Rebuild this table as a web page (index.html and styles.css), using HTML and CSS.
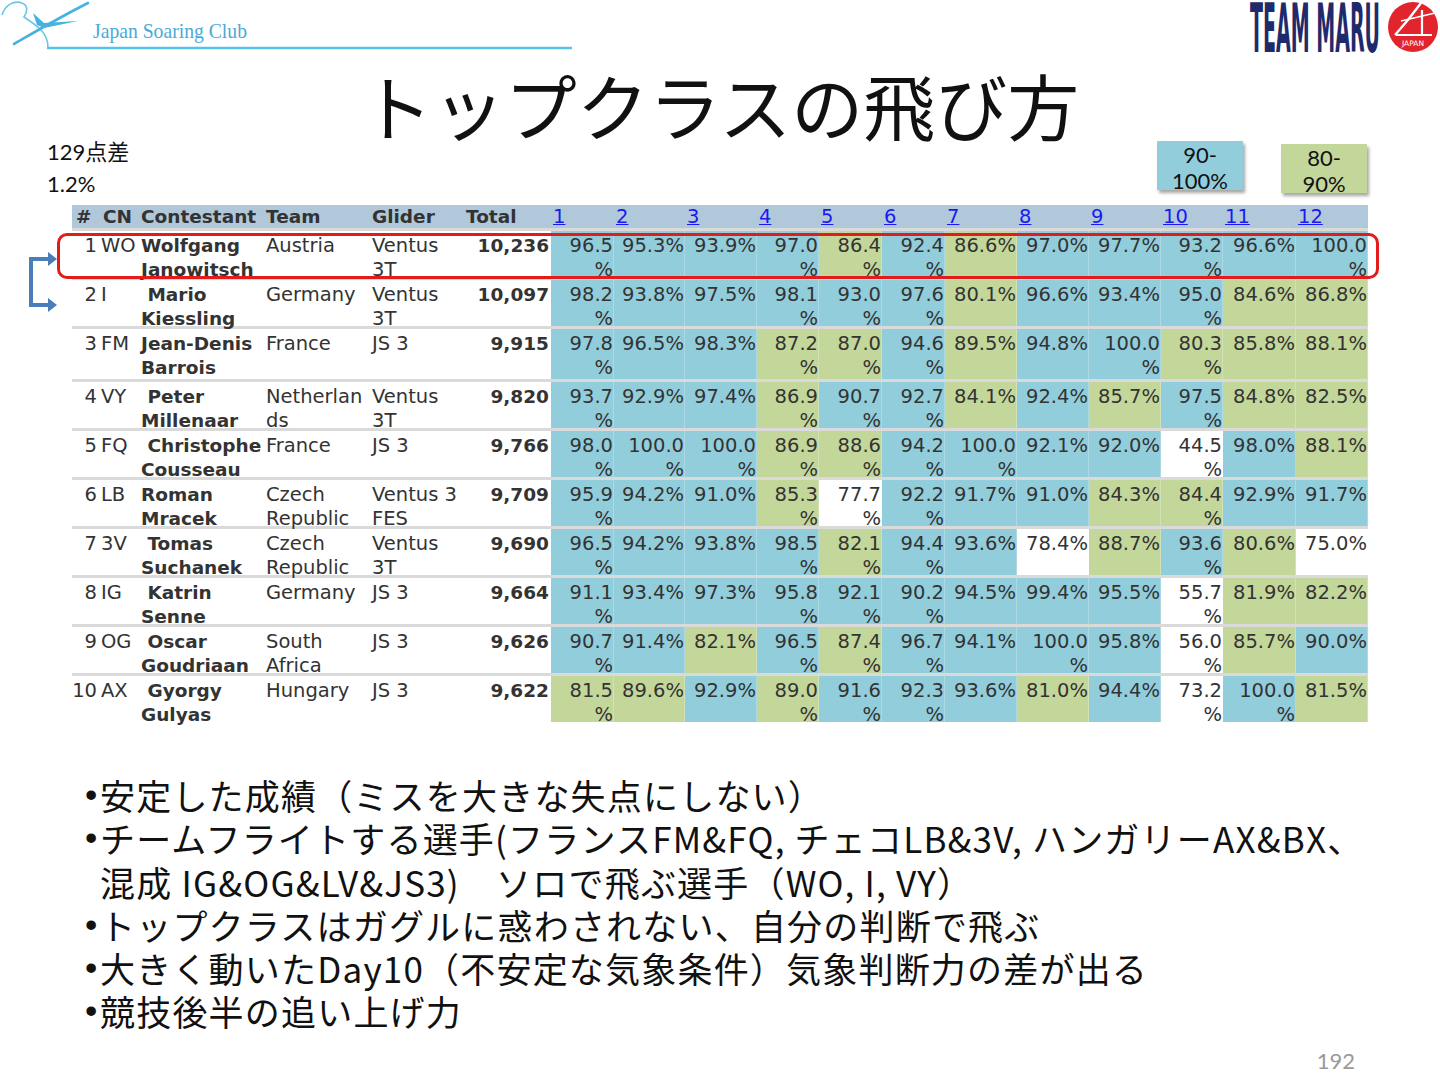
FILE: index.html
```html
<!DOCTYPE html>
<html lang="ja">
<head>
<meta charset="utf-8">
<title>トップクラスの飛び方</title>
<link rel="stylesheet" href="styles.css">
</head>
<body>
<div class="slide">
  <header class="top">
    <svg class="jsc" width="580" height="55" viewBox="0 0 580 55">
      <path d="M2 15 C5 5 14 0 22 3 C29 6 27 12 24 17 C30 21 36 25 41 30 C46 35 48 41 48 48" fill="none" stroke="#6cc6e8" stroke-width="1.6"/>
      <path d="M14 44 C40 29 62 16 88 3" fill="none" stroke="#45b2df" stroke-width="2.6" stroke-linecap="round"/>
      <path d="M33 13 L37 25 L44 28 L78 21 L44 23 Z" fill="#45b2df"/>
      <line x1="47" y1="48" x2="572" y2="48" stroke="#58c1ea" stroke-width="2.6"/>
      <text x="93" y="38" font-family="Liberation Serif" font-size="21" fill="#4aaad7" textLength="154" lengthAdjust="spacingAndGlyphs">Japan Soaring Club</text>
    </svg>
    <svg class="maru" width="195" height="58" viewBox="0 0 195 58">
      <text transform="translate(5 52) scale(1 3.2)" x="0" y="0" font-family="DejaVu Sans Condensed" font-weight="bold" font-size="21" fill="#1f2a6c" textLength="130" lengthAdjust="spacingAndGlyphs">TEAM MARU</text>
      <circle cx="168" cy="27" r="25" fill="#e2242c"/>
      <path d="M176 3 C168 14 160 24 150 35" fill="none" stroke="#fff" stroke-width="2.4"/>
      <path d="M151 35 L187 35" stroke="#fff" stroke-width="2.2"/>
      <path d="M177 10 L177 36" stroke="#fff" stroke-width="2.2"/>
      <path d="M156 21 L190 13" stroke="#fff" stroke-width="1.6"/>
      <text x="168" y="46" text-anchor="middle" font-family="DejaVu Sans" font-size="7.5" fill="#fff">JAPAN</text>
    </svg>
  </header>

  <h1 class="title">トップクラスの飛び方</h1>

  <div class="info">
    <div class="notes">
      <div>129点差</div>
      <div>1.2%</div>
    </div>
    <div class="legend">
      <div class="lg lg-b">90-<br>100%</div>
      <div class="lg lg-g">80-<br>90%</div>
    </div>
  </div>

  <div class="results">
    <div class="hd">
      <div class="c hash">#</div><div class="c cnh">CN</div><div class="c">Contestant</div><div class="c">Team</div><div class="c gl">Glider</div><div class="c gl">Total</div>
      <div class="c dh"><a href="#">1</a></div><div class="c dh"><a href="#">2</a></div><div class="c dh"><a href="#">3</a></div><div class="c dh"><a href="#">4</a></div><div class="c dh"><a href="#">5</a></div><div class="c dh"><a href="#">6</a></div><div class="c dh"><a href="#">7</a></div><div class="c dh"><a href="#">8</a></div><div class="c dh"><a href="#">9</a></div><div class="c dh"><a href="#">10</a></div><div class="c dh"><a href="#">11</a></div><div class="c dh"><a href="#">12</a></div>
    </div>

    <div class="tr">
      <div class="c rk">1</div><div class="c cn">WO</div><div class="c nm">Wolfgang<br>Janowitsch</div><div class="c">Austria</div><div class="c gl">Ventus<br>3T</div><div class="c tot">10,236</div>
      <div class="c d b">96.5<br>%</div><div class="c d b">95.3%</div><div class="c d b">93.9%</div><div class="c d b">97.0<br>%</div><div class="c d g">86.4<br>%</div><div class="c d b">92.4<br>%</div><div class="c d g">86.6%</div><div class="c d b">97.0%</div><div class="c d b">97.7%</div><div class="c d b">93.2<br>%</div><div class="c d b">96.6%</div><div class="c d b">100.0<br>%</div>
    </div>
    <div class="tr">
      <div class="c rk">2</div><div class="c cn">I</div><div class="c nm">&nbsp;Mario<br>Kiessling</div><div class="c">Germany</div><div class="c gl">Ventus<br>3T</div><div class="c tot">10,097</div>
      <div class="c d b">98.2<br>%</div><div class="c d b">93.8%</div><div class="c d b">97.5%</div><div class="c d b">98.1<br>%</div><div class="c d b">93.0<br>%</div><div class="c d b">97.6<br>%</div><div class="c d g">80.1%</div><div class="c d b">96.6%</div><div class="c d b">93.4%</div><div class="c d b">95.0<br>%</div><div class="c d g">84.6%</div><div class="c d g">86.8%</div>
    </div>
    <div class="tr tall">
      <div class="c rk">3</div><div class="c cn">FM</div><div class="c nm">Jean-Denis<br>Barrois</div><div class="c">France</div><div class="c gl">JS 3</div><div class="c tot">9,915</div>
      <div class="c d b">97.8<br>%</div><div class="c d b">96.5%</div><div class="c d b">98.3%</div><div class="c d g">87.2<br>%</div><div class="c d g">87.0<br>%</div><div class="c d b">94.6<br>%</div><div class="c d g">89.5%</div><div class="c d b">94.8%</div><div class="c d b">100.0<br>%</div><div class="c d g">80.3<br>%</div><div class="c d g">85.8%</div><div class="c d g">88.1%</div>
    </div>
    <div class="tr">
      <div class="c rk">4</div><div class="c cn">VY</div><div class="c nm">&nbsp;Peter<br>Millenaar</div><div class="c">Netherlan<br>ds</div><div class="c gl">Ventus<br>3T</div><div class="c tot">9,820</div>
      <div class="c d b">93.7<br>%</div><div class="c d b">92.9%</div><div class="c d b">97.4%</div><div class="c d g">86.9<br>%</div><div class="c d b">90.7<br>%</div><div class="c d b">92.7<br>%</div><div class="c d g">84.1%</div><div class="c d b">92.4%</div><div class="c d g">85.7%</div><div class="c d b">97.5<br>%</div><div class="c d g">84.8%</div><div class="c d g">82.5%</div>
    </div>
    <div class="tr">
      <div class="c rk">5</div><div class="c cn">FQ</div><div class="c nm">&nbsp;Christophe<br>Cousseau</div><div class="c">France</div><div class="c gl">JS 3</div><div class="c tot">9,766</div>
      <div class="c d b">98.0<br>%</div><div class="c d b">100.0<br>%</div><div class="c d b">100.0<br>%</div><div class="c d g">86.9<br>%</div><div class="c d g">88.6<br>%</div><div class="c d b">94.2<br>%</div><div class="c d b">100.0<br>%</div><div class="c d b">92.1%</div><div class="c d b">92.0%</div><div class="c d w">44.5<br>%</div><div class="c d b">98.0%</div><div class="c d g">88.1%</div>
    </div>
    <div class="tr">
      <div class="c rk">6</div><div class="c cn">LB</div><div class="c nm">Roman<br>Mracek</div><div class="c">Czech<br>Republic</div><div class="c gl">Ventus 3<br>FES</div><div class="c tot">9,709</div>
      <div class="c d b">95.9<br>%</div><div class="c d b">94.2%</div><div class="c d b">91.0%</div><div class="c d g">85.3<br>%</div><div class="c d w">77.7<br>%</div><div class="c d b">92.2<br>%</div><div class="c d b">91.7%</div><div class="c d b">91.0%</div><div class="c d g">84.3%</div><div class="c d g">84.4<br>%</div><div class="c d b">92.9%</div><div class="c d b">91.7%</div>
    </div>
    <div class="tr">
      <div class="c rk">7</div><div class="c cn">3V</div><div class="c nm">&nbsp;Tomas<br>Suchanek</div><div class="c">Czech<br>Republic</div><div class="c gl">Ventus<br>3T</div><div class="c tot">9,690</div>
      <div class="c d b">96.5<br>%</div><div class="c d b">94.2%</div><div class="c d b">93.8%</div><div class="c d b">98.5<br>%</div><div class="c d g">82.1<br>%</div><div class="c d b">94.4<br>%</div><div class="c d b">93.6%</div><div class="c d w">78.4%</div><div class="c d g">88.7%</div><div class="c d b">93.6<br>%</div><div class="c d g">80.6%</div><div class="c d w">75.0%</div>
    </div>
    <div class="tr">
      <div class="c rk">8</div><div class="c cn">IG</div><div class="c nm">&nbsp;Katrin<br>Senne</div><div class="c">Germany</div><div class="c gl">JS 3</div><div class="c tot">9,664</div>
      <div class="c d b">91.1<br>%</div><div class="c d b">93.4%</div><div class="c d b">97.3%</div><div class="c d b">95.8<br>%</div><div class="c d b">92.1<br>%</div><div class="c d b">90.2<br>%</div><div class="c d b">94.5%</div><div class="c d b">99.4%</div><div class="c d b">95.5%</div><div class="c d w">55.7<br>%</div><div class="c d g">81.9%</div><div class="c d g">82.2%</div>
    </div>
    <div class="tr">
      <div class="c rk">9</div><div class="c cn">OG</div><div class="c nm">&nbsp;Oscar<br>Goudriaan</div><div class="c">South<br>Africa</div><div class="c gl">JS 3</div><div class="c tot">9,626</div>
      <div class="c d b">90.7<br>%</div><div class="c d b">91.4%</div><div class="c d g">82.1%</div><div class="c d b">96.5<br>%</div><div class="c d g">87.4<br>%</div><div class="c d b">96.7<br>%</div><div class="c d b">94.1%</div><div class="c d b">100.0<br>%</div><div class="c d b">95.8%</div><div class="c d w">56.0<br>%</div><div class="c d g">85.7%</div><div class="c d b">90.0%</div>
    </div>
    <div class="tr">
      <div class="c rk">10</div><div class="c cn">AX</div><div class="c nm">&nbsp;Gyorgy<br>Gulyas</div><div class="c">Hungary</div><div class="c gl">JS 3</div><div class="c tot">9,622</div>
      <div class="c d g">81.5<br>%</div><div class="c d g">89.6%</div><div class="c d b">92.9%</div><div class="c d g">89.0<br>%</div><div class="c d b">91.6<br>%</div><div class="c d b">92.3<br>%</div><div class="c d b">93.6%</div><div class="c d g">81.0%</div><div class="c d b">94.4%</div><div class="c d w">73.2<br>%</div><div class="c d b">100.0<br>%</div><div class="c d g">81.5%</div>
    </div>
  </div>

  <ul class="bullets">
    <li><span class="dot">•</span><span>安定した成績（ミスを大きな失点にしない）</span></li>
    <li><span class="dot">•</span><span>チームフライトする選手(フランスFM&amp;FQ, チェコLB&amp;3V, ハンガリーAX&amp;BX、<br>混成 IG&amp;OG&amp;LV&amp;JS3)　ソロで飛ぶ選手（WO, I, VY）</span></li>
    <li><span class="dot">•</span><span>トップクラスはガグルに惑わされない、自分の判断で飛ぶ</span></li>
    <li><span class="dot">•</span><span>大きく動いたDay10（不安定な気象条件）気象判断力の差が出る</span></li>
    <li><span class="dot">•</span><span>競技後半の追い上げ力</span></li>
  </ul>

  <div class="pgnum">192</div>

  <div class="hilite"></div>
  <svg class="arrow" width="45" height="70" viewBox="20 245 45 70">
    <path d="M50 259 L31 259 L31 305 L50 305" fill="none" stroke="#4a7ebb" stroke-width="4"/>
    <polygon points="48,252 57,259 48,266" fill="#4a7ebb"/>
    <polygon points="48,298 57,305 48,312" fill="#4a7ebb"/>
  </svg>
</div>
</body>
</html>
```

FILE: styles.css
```css
* { box-sizing: border-box; }
body { margin: 0; background: #fff; }
.slide {
  position: relative;
  width: 1440px;
  height: 1080px;
  overflow: hidden;
  font-family: "Noto Sans CJK JP", sans-serif;
  color: #111;
}
.top {
  display: flex;
  justify-content: space-between;
  height: 60px;
}
.jsc, .maru { display: block; }

.title {
  margin: 8px 0 0;
  text-align: center;
  font-size: 72px;
  line-height: 71px;
  font-weight: 400;
  color: #111;
}

.info {
  display: flex;
  justify-content: space-between;
  height: 66px;
  padding: 0 73px 0 47px;
}
.notes {
  margin-top: -3px;
  font-family: "Lato", "Noto Sans CJK JP", sans-serif;
  font-size: 22px;
  line-height: 32px;
  color: #111;
}
.legend {
  display: flex;
  gap: 38px;
  align-items: flex-start;
}
.lg {
  width: 86px;
  height: 49px;
  margin-top: 2px;
  padding-top: 1px;
  text-align: center;
  font-family: "Lato", sans-serif;
  font-size: 22px;
  line-height: 26px;
  color: #111;
  box-shadow: 2px 3px 3px rgba(0, 0, 0, 0.35);
}
.lg-b { background: #92cddc; }
.lg-g { background: #c4d79b; margin-top: 5px; }

.results {
  margin-left: 72px;
  width: 1296px;
  font-family: "DejaVu Sans", Verdana, sans-serif;
  font-size: 19.5px;
  color: #333;
}
.hd, .tr {
  display: grid;
  grid-template-columns: 27px 41px 125px 105px 94px 87px 63px 71px 72px 62px 63px 63px 72px 72px 72px 62px 73px 72px;
}
.hd {
  height: 23px;
  grid-template-rows: 23px;
  background: #b0c8da;
  font-weight: bold;
  font-size: 18.5px;
  line-height: 23px;
}
.hd .c { padding: 0 0 0 1px; line-height: 23px; }
.hd .hash, .hd .cnh { padding-left: 4px; }
.hd .gl, .hd .dh { padding-left: 2px; }
.dh { font-weight: normal; font-size: 19.5px; }
.dh a { color: #1a1af0; text-decoration: underline; }

.tr {
  height: 49px;
  grid-template-rows: 46px;
  border-top: 3px solid #dadada;
}
.tr.tall { height: 53px; grid-template-rows: 50px; }

.c {
  padding: 3px 0 0 1px;
  line-height: 24px;
  white-space: nowrap;
}
.rk { text-align: right; padding-right: 2px; padding-left: 0; }
.cn { padding-left: 2px; }
.nm { font-weight: bold; font-size: 18.5px; }
.gl { padding-left: 2px; }
.tot { text-align: right; font-weight: bold; font-size: 18.5px; padding-right: 2px; }
.d {
  text-align: right;
  padding-right: 1px;
  box-shadow: inset -1px 0 rgba(255, 255, 255, 0.25);
}
.b { background: #92cddc; }
.g { background: #c4d79b; }
.w { background: #fff; box-shadow: none; }

.bullets {
  list-style: none;
  margin: 51px 0 0 85px;
  padding: 0;
  font-size: 35px;
  letter-spacing: 1.2px;
  line-height: 43.3px;
  color: #111;
}
.bullets li { display: flex; }
.dot {
  flex: 0 0 15px;
  letter-spacing: 0;
  font-family: "Liberation Sans", sans-serif;
}

.pgnum {
  margin-top: 16px;
  padding-right: 85px;
  text-align: right;
  font-family: "Lato", sans-serif;
  font-size: 22px;
  line-height: 24px;
  color: #999;
}

.hilite {
  position: absolute;
  left: 57px;
  top: 233px;
  width: 1322px;
  height: 46px;
  border: 3px solid #e31b1b;
  border-radius: 10px;
}
.arrow {
  position: absolute;
  left: 20px;
  top: 245px;
}
```
